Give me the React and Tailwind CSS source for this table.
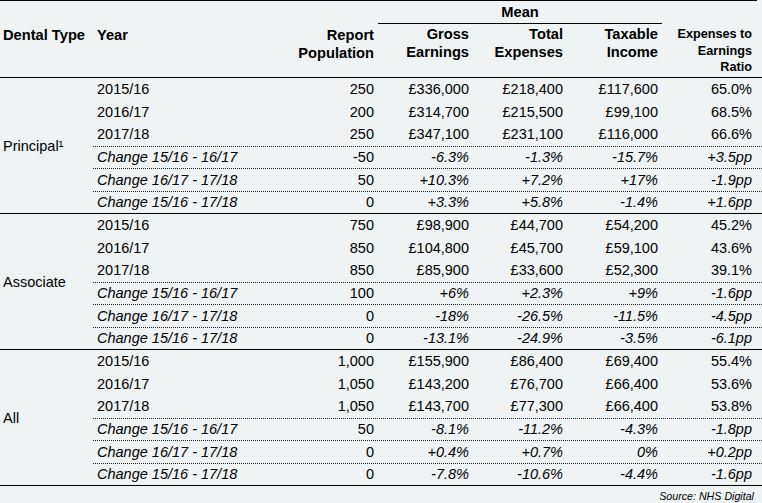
const sections = [
  {
    label: 'Principal¹',
    rows: [
      ['2015/16', '250', '£336,000', '£218,400', '£117,600', '65.0%'],
      ['2016/17', '200', '£314,700', '£215,500', '£99,100', '68.5%'],
      ['2017/18', '250', '£347,100', '£231,100', '£116,000', '66.6%'],
      ['Change 15/16 - 16/17', '-50', '-6.3%', '-1.3%', '-15.7%', '+3.5pp'],
      ['Change 16/17 - 17/18', '50', '+10.3%', '+7.2%', '+17%', '-1.9pp'],
      ['Change 15/16 - 17/18', '0', '+3.3%', '+5.8%', '-1.4%', '+1.6pp'],
    ],
  },
  {
    label: 'Associate',
    rows: [
      ['2015/16', '750', '£98,900', '£44,700', '£54,200', '45.2%'],
      ['2016/17', '850', '£104,800', '£45,700', '£59,100', '43.6%'],
      ['2017/18', '850', '£85,900', '£33,600', '£52,300', '39.1%'],
      ['Change 15/16 - 16/17', '100', '+6%', '+2.3%', '+9%', '-1.6pp'],
      ['Change 16/17 - 17/18', '0', '-18%', '-26.5%', '-11.5%', '-4.5pp'],
      ['Change 15/16 - 17/18', '0', '-13.1%', '-24.9%', '-3.5%', '-6.1pp'],
    ],
  },
  {
    label: 'All',
    rows: [
      ['2015/16', '1,000', '£155,900', '£86,400', '£69,400', '55.4%'],
      ['2016/17', '1,050', '£143,200', '£76,700', '£66,400', '53.6%'],
      ['2017/18', '1,050', '£143,700', '£77,300', '£66,400', '53.8%'],
      ['Change 15/16 - 16/17', '50', '-8.1%', '-11.2%', '-4.3%', '-1.8pp'],
      ['Change 16/17 - 17/18', '0', '+0.4%', '+0.7%', '0%', '+0.2pp'],
      ['Change 15/16 - 17/18', '0', '-7.8%', '-10.6%', '-4.4%', '-1.6pp'],
    ],
  },
]

function Header() {
  return (
    <div className="grid h-[77px] grid-cols-[93px_190px_95px_95px_94px_95px_100px] grid-rows-[23px_1fr] border-b border-black text-[14.67px] font-bold leading-[18px]">
      <div className="col-start-1 row-span-2 row-start-1 pl-[3px] pt-[25px]">Dental Type</div>
      <div className="col-start-2 row-span-2 row-start-1 pl-[4px] pt-[25px]">Year</div>
      <div className="col-start-3 row-span-2 row-start-1 pr-[4px] pt-[25px] text-right">
        Report
        <br />
        Population
      </div>
      <div className="col-span-3 col-start-4 row-start-1 border-b border-black text-center leading-[22px]">Mean</div>
      <div className="col-start-4 row-start-2 pr-[4px] pt-[1px] text-right">
        Gross
        <br />
        Earnings
      </div>
      <div className="col-start-5 row-start-2 pr-[4px] pt-[1px] text-right">
        Total
        <br />
        Expenses
      </div>
      <div className="col-start-6 row-start-2 pr-[4px] pt-[1px] text-right">
        Taxable
        <br />
        Income
      </div>
      <div className="col-start-7 row-span-2 row-start-1 pr-[10px] pt-[25px] text-right text-[12.67px] leading-[16.5px]">
        Expenses to
        <br />
        Earnings
        <br />
        Ratio
      </div>
    </div>
  )
}

function Section({ section }) {
  return (
    <div className="flex h-[136px] border-b border-black">
      <div className="flex w-[93px] items-center pl-[3px]">{section.label}</div>
      <div className="flex flex-1 flex-col">
        {section.rows.map((row, i) => {
          const change = i >= 3
          const it = change ? 'italic' : ''
          return (
            <div
              key={i}
              className={`grid h-[22.5px] grid-cols-[190px_95px_95px_94px_95px_100px] items-center ${
                change ? 'border-t border-dotted border-[#222]' : ''
              }`}
            >
              <div className={`pl-[4px] ${it}`}>{row[0]}</div>
              <div className="pr-[4px] text-right">{row[1]}</div>
              <div className={`pr-[4px] text-right ${it}`}>{row[2]}</div>
              <div className={`pr-[4px] text-right ${it}`}>{row[3]}</div>
              <div className={`pr-[4px] text-right ${it}`}>{row[4]}</div>
              <div className={`pr-[10px] text-right ${it}`}>{row[5]}</div>
            </div>
          )
        })}
      </div>
    </div>
  )
}

export default function App() {
  return (
    <div className="h-[503px] w-[762px] bg-[#eff3f4] font-['Liberation_Sans',Arial,sans-serif] text-[14.5px] leading-[18px] text-black">
      <div className="h-px w-[757px] bg-black" />
      <Header />
      {sections.map((s) => (
        <Section key={s.label} section={s} />
      ))}
      <div className="pr-[8px] pt-[3px] text-right text-[10.67px] italic leading-[14px]">Source: NHS Digital</div>
    </div>
  )
}
